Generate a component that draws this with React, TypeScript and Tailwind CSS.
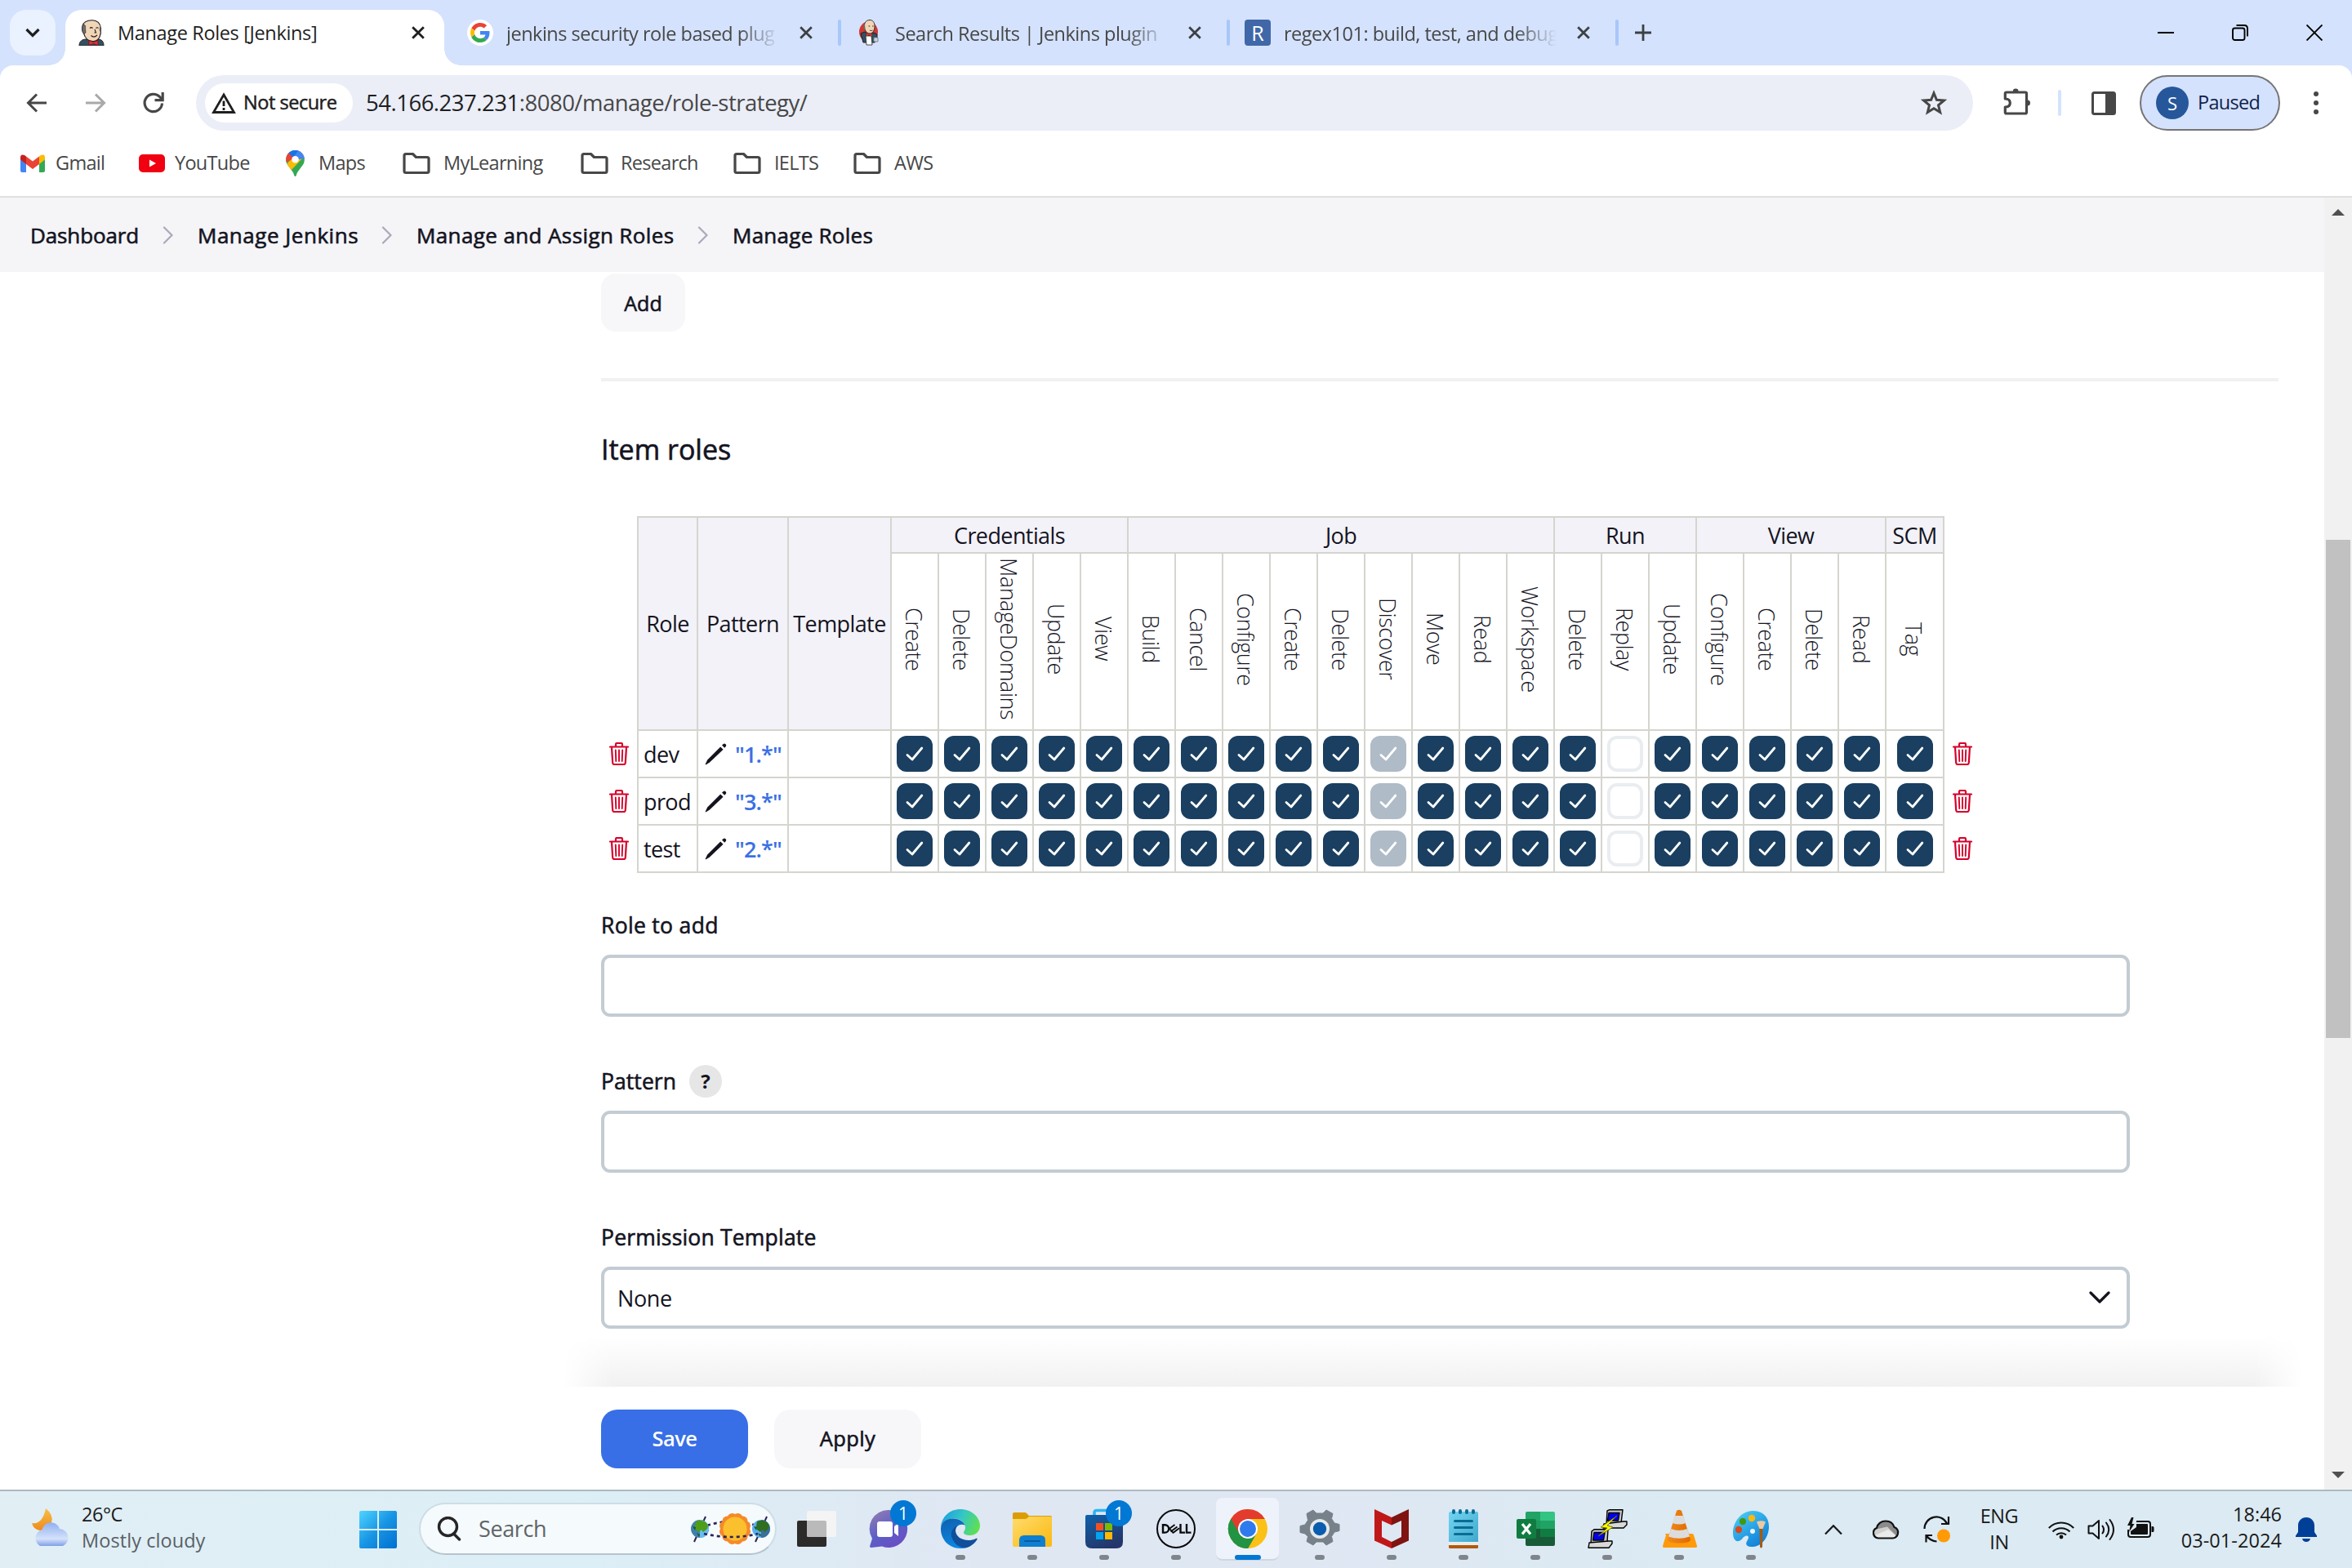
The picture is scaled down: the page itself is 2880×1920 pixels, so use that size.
import type { ReactNode } from "react";

const GROUPS: { name: string; perms: string[]; span: string }[] = [
  { name: "Credentials", perms: ["Create", "Delete", "ManageDomains", "Update", "View"], span: "col-span-5" },
  {
    name: "Job",
    perms: ["Build", "Cancel", "Configure", "Create", "Delete", "Discover", "Move", "Read", "Workspace"],
    span: "col-span-9",
  },
  { name: "Run", perms: ["Delete", "Replay", "Update"], span: "col-span-3" },
  { name: "View", perms: ["Configure", "Create", "Delete", "Read"], span: "col-span-4" },
  { name: "SCM", perms: ["Tag"], span: "col-span-1" },
];

const ROLES = [
  { name: "dev", pattern: '"1.*"' },
  { name: "prod", pattern: '"3.*"' },
  { name: "test", pattern: '"2.*"' },
];

/* ---------- small glyphs ---------- */

function Cross({ className }: { className: string }) {
  return (
    <svg viewBox="0 0 16 16" className={className} fill="none" stroke="currentColor" strokeWidth="2.8">
      <path d="M1.2 1.2 14.8 14.8M14.8 1.2 1.2 14.8" />
    </svg>
  );
}

function JenkinsHead({ badge }: { badge?: boolean }) {
  return (
    <svg viewBox="0 0 32 32" className="h-8 w-8 shrink-0">
      {badge && <ellipse cx="15.500" cy="15" rx="11.500" ry="12.500" fill="#d33833" />}
      {badge ? (
        <>
          <path d="M6 17 11 15l5 5 6-4 4 2v7l-3 3H9z" fill="#335061" stroke="#231f20" />
          <path d="M12 20h7l1 11h-7z" fill="#fff" stroke="#231f20" strokeWidth=".8" />
          <path d="M22 22h5v5h-5z" fill="#c9d3da" stroke="#6d7a83" strokeWidth=".8" />
          <path d="M10.500 7c0-4 3-6.500 6.500-6.500S23 3 23 8s-2 8.500-5.500 9c-3 .3-5.500-2-6.500-5z" fill="#f0d6b7" stroke="#231f20" strokeWidth=".9" />
          <path d="M11 5c-1.500 1-2 4-1.500 7l1.500 1z" fill="#6d6b6d" />
          <path d="m13 17 3 1.500 3.500-1.500v3.500L16 19l-3 1.500z" fill="#d33833" />
          <path d="M15.500 8h1.800M20 8h1.500M17 13c1 .8 2.500.6 3.500 0" stroke="#231f20" strokeWidth=".9" fill="none" />
        </>
      ) : (
        <>
          <path d="M1 32c0-5 3-8 9-8l7 2 6-2c6 0 8 3 8 8z" fill="#335061" stroke="#231f20" />
          <path d="M5 8C6 3 11 .7 17 .7c6 0 10 4 10.500 10C28 18 26 26 18.500 26.500 12 27 8 22 6.500 17 5 15 4 13 5 8z" fill="#f0d6b7" stroke="#231f20" strokeWidth="1.100" />
          <path d="M5.500 6.500c3-.8 3.500 1.500 3 4l.5 5.500-2 1.500C4 15 4 10 5.500 6.500z" fill="#6d6b6d" stroke="#231f20" strokeWidth=".6" />
          <path d="M26.500 7c1.200 3 1.200 6 .6 9l-1.500-3z" fill="#6d6b6d" />
          <path d="M14 10.500c1-1 2.500-1 3.500 0M21.500 10.500c1-1 2-1 3 0M20 12l1.500 4h-2M15.500 19.500c2 2 5 1.800 7.500-.5" fill="none" stroke="#231f20" strokeWidth="1.100" />
          <path d="m13 25.500 5.500 2 5.500-2v6l-5.500-2-5.500 2z" fill="#d33833" stroke="#81001b" strokeWidth=".7" />
        </>
      )}
    </svg>
  );
}

function GoogleG() {
  return (
    <svg viewBox="0 0 48 48" className="h-6 w-6">
      <path fill="#EA4335" d="M24 9.500c3.540 0 6.710 1.220 9.210 3.600l6.850-6.850C35.900 2.380 30.470 0 24 0 14.620 0 6.510 5.380 2.560 13.220l7.980 6.190C12.430 13.720 17.740 9.500 24 9.500z" />
      <path fill="#4285F4" d="M46.980 24.550c0-1.570-.15-3.090-.38-4.550H24v9.020h12.940c-.58 2.960-2.260 5.480-4.780 7.180l7.730 6c4.510-4.180 7.090-10.360 7.090-17.650z" />
      <path fill="#FBBC05" d="M10.530 28.590c-.48-1.450-.76-2.990-.76-4.590s.27-3.140.76-4.590l-7.980-6.190C.92 16.460 0 20.120 0 24c0 3.880.92 7.540 2.560 10.780l7.970-6.190z" />
      <path fill="#34A853" d="M24 48c6.480 0 11.930-2.130 15.890-5.810l-7.730-6c-2.150 1.450-4.920 2.300-8.160 2.300-6.260 0-11.570-4.220-13.470-9.910l-7.980 6.190C6.510 42.620 14.620 48 24 48z" />
    </svg>
  );
}

function Folder() {
  return (
    <svg viewBox="0 0 34 28" className="h-7 w-[34px] shrink-0" fill="none" stroke="#474747" strokeWidth="3.200" strokeLinejoin="round">
      <path d="M2 4.500Q2 2.500 4 2.500h8.500l4 4H30q2 0 2 2V23.500q0 2-2 2H4q-2 0-2-2z" />
    </svg>
  );
}

function TrashIcon() {
  return (
    <svg viewBox="0 0 24 28" className="h-7 w-6" fill="none" stroke="#d6002a" strokeWidth="2.200" strokeLinecap="round" strokeLinejoin="round">
      <path d="M1 5.500h22M8 5V2.500Q8 1 9.500 1h5Q16 1 16 2.500V5M3 6l1.200 19Q4.400 27 6 27h12q1.600 0 1.800-2L21 6" />
      <path d="M7.800 9.500 8.300 23M12 9.500V23M16.200 9.500 15.700 23" strokeWidth="1.900" />
    </svg>
  );
}

function PencilIcon() {
  return (
    <svg viewBox="0 0 27 27" className="h-[27px] w-[27px] shrink-0" fill="#14141f">
      <path d="M19.200 4.400 22.600 7.800 6 23.600 1.600 26.200Q.3 26.700.8 25.400L3.200 20.600z" />
      <path d="M21 2.600 22.800.9q1.400-1 2.700.3t.3 2.700L24.200 5.800z" />
    </svg>
  );
}

/* ---------- browser chrome ---------- */

function InactiveTab({ icon, title }: { icon: ReactNode; title: string }) {
  return (
    <div className="flex h-full w-[458px] items-center">
      <div className="flex w-8 shrink-0 justify-center">{icon}</div>
      <div className="mt-0.5 ml-4 w-[336px] overflow-hidden leading-10 tracking-[-0.021em] whitespace-nowrap text-[#474747] [mask-image:linear-gradient(to_right,black_285px,transparent_334px)]">
        {title}
      </div>
      <Cross className="ml-[23px] h-4 w-4 shrink-0 text-[#3c4043]" />
      <div className="ml-auto h-8 w-1 rounded bg-[#a8c7fa]" />
    </div>
  );
}

function TabStrip() {
  return (
    <div className="flex h-20 items-center bg-[#d4e2fd] text-[23.500px]">
      <div className="ml-3 flex h-14 w-14 items-center justify-center rounded-[20px] bg-[#eaf1ff]">
        <svg viewBox="0 0 18 12" className="h-3 w-[18px]" fill="none" stroke="#1f1f1f" strokeWidth="3.200">
          <path d="m1.500 2 7.500 7.500L16.500 2" />
        </svg>
      </div>
      <div className="relative ml-3 flex h-[68px] w-[464px] items-center self-end rounded-t-[20px] bg-white pb-3 pl-4">
        <div className="absolute bottom-0 -left-5 h-5 w-5 bg-[radial-gradient(circle_at_0_0,transparent_19.500px,white_20px)]" />
        <div className="absolute -right-5 bottom-0 h-5 w-5 bg-[radial-gradient(circle_at_100%_0,transparent_19.500px,white_20px)]" />
        <JenkinsHead />
        <span className="mt-0.5 ml-4 w-[360px] tracking-[-0.015em] whitespace-nowrap text-[#1f1f1f]">Manage Roles [Jenkins]</span>
        <Cross className="h-4 w-4 shrink-0 text-[#1f1f1f]" />
      </div>
      <div className="w-7" />
      <InactiveTab
        title="jenkins security role based plug"
        icon={
          <div className="flex h-8 w-8 items-center justify-center rounded-full bg-white">
            <GoogleG />
          </div>
        }
      />
      <div className="w-[18px]" />
      <InactiveTab title="Search Results | Jenkins plugin" icon={<JenkinsHead badge />} />
      <div className="w-[18px]" />
      <InactiveTab
        title="regex101: build, test, and debug"
        icon={<div className="flex h-8 w-8 items-center justify-center rounded-sm bg-[#4067a8] text-[25px] leading-none text-white">R</div>}
      />
      <svg viewBox="0 0 20 20" className="ml-5 h-5 w-5" stroke="#3c4043" strokeWidth="2.800">
        <path d="M10 0v20M0 10h20" />
      </svg>
      <div className="ml-auto flex items-center gap-[71px] pr-9">
        <div className="h-0.5 w-5 bg-black" />
        <svg viewBox="0 0 20 20" className="h-5 w-5" fill="none" stroke="#000" strokeWidth="1.900">
          <rect x="1" y="4.500" width="14.500" height="14.500" rx="2.500" />
          <path d="M5.500 1H15q4 0 4 4v9.500" />
        </svg>
        <svg viewBox="0 0 20 20" className="h-5 w-5" stroke="#000" strokeWidth="1.900">
          <path d="m.5.5 19 19M19.500.5l-19 19" />
        </svg>
      </div>
    </div>
  );
}

function Toolbar() {
  return (
    <div className="bg-[#d4e2fd]">
      <div className="flex h-20 items-center rounded-t-2xl bg-white pt-3 text-[23.500px]">
        <svg viewBox="0 0 26 24" className="ml-8 h-6 w-[26px]" fill="none" stroke="#474747" strokeWidth="3">
          <path d="M25 12H3M13 1.500 2.500 12 13 22.500" />
        </svg>
        <svg viewBox="0 0 26 24" className="ml-[46px] h-6 w-[26px]" fill="none" stroke="#a9a9a9" strokeWidth="3">
          <path d="M1 12h22M13 1.500 23.500 12 13 22.500" />
        </svg>
        <svg viewBox="0 0 26 26" className="ml-[45px] h-[26px] w-[26px]" fill="none" stroke="#474747" strokeWidth="3.200">
          <path d="M23.500 13.500A10.700 10.700 0 1 1 20.500 5.500L24 9" />
          <path d="M24.200 0v9.600h-9.700" />
        </svg>
        <div className="ml-[39px] flex h-[68px] w-[2176px] items-center rounded-full bg-[#ebeef7] pl-[11px]">
          <div className="flex h-12 w-[181px] items-center rounded-full bg-white pl-2">
            <svg viewBox="0 0 30 26" className="h-[26px] w-[30px] shrink-0" fill="none" stroke="#1f1f1f" strokeWidth="2.800">
              <path d="M15 3 27.500 24.500h-25z" />
              <path d="M15 10.500v6.500M15 19v3" />
            </svg>
            <span className="ml-[9px] tracking-[-0.02em] whitespace-nowrap text-[#1f1f1f] [-webkit-text-stroke:0.500px_#1f1f1f]">Not secure</span>
          </div>
          <span className="ml-4 text-[27.500px] tracking-[-0.018em] text-[#474747]">
            <span className="text-[#1f1f1f]">54.166.237.231</span>:8080/manage/role-strategy/
          </span>
          <svg viewBox="0 0 32 32" className="mr-8 ml-auto h-8 w-8" fill="none" stroke="#474747" strokeWidth="3">
            <path d="m16 4 3.400 8.300 9 .7-6.900 5.800 2.200 8.700-7.700-4.700-7.700 4.700 2.200-8.700L3.600 13l9-.7z" />
          </svg>
        </div>
        <svg viewBox="0 0 34 34" className="-mt-1 ml-[37px] h-[34px] w-[34px]" fill="none" stroke="#474747" strokeWidth="3.200" strokeLinejoin="round">
          <path d="M2.300 7.500Q2.300 6 4 6H27q1.500 0 1.500 1.500V30.500Q28.500 32 27 32H4q-1.700 0-1.700-1.500V24c5 0 6-3 6-5s-1-5-6-5z" />
          <path d="M11.800 5a3.400 3.400 0 0 1 6.800 0zM29.500 15.500a3.400 3.400 0 0 1 0 7z" fill="#474747" stroke="none" />
        </svg>
        <div className="ml-[33px] h-8 w-1 rounded bg-[#d3e3fd]" />
        <svg viewBox="0 0 30 29" className="ml-[37px] h-[29px] w-[30px]" fill="none" stroke="#474747" strokeWidth="3">
          <rect x="1.500" y="1.500" width="27" height="26" rx="2" />
          <path d="M17 1.500h10v26H17z" fill="#474747" stroke="none" />
        </svg>
        <div className="ml-[29px] flex h-[68px] w-[172px] items-center rounded-full border-2 border-[#757575] bg-[#d5e2fd] pl-[18px]">
          <div className="flex h-10 w-10 items-center justify-center rounded-full bg-[#26579b] text-[22px] text-white">S</div>
          <span className="ml-[11px] tracking-[-0.03em] text-[#0f1f4d]">Paused</span>
        </div>
        <div className="ml-[41px] flex flex-col gap-[5px]">
          <div className="h-1.5 w-1.5 rounded-full bg-[#474747]" />
          <div className="h-1.5 w-1.5 rounded-full bg-[#474747]" />
          <div className="h-1.5 w-1.5 rounded-full bg-[#474747]" />
        </div>
      </div>
    </div>
  );
}

function Bookmark({ icon, label, width, gap }: { icon: ReactNode; label: string; width: string; gap: string }) {
  return (
    <div className={`flex items-center whitespace-nowrap ${width} ${gap}`}>
      {icon}
      <span>{label}</span>
    </div>
  );
}

function Bookmarks() {
  return (
    <div className="flex h-[82px] items-center border-b-2 border-[#e0e0e0] bg-white pl-[25px] text-[23.500px] tracking-[-0.03em] text-[#474747]">
      <Bookmark
        width="w-[145px]"
        gap="gap-[13px]"
        label="Gmail"
        icon={
          <svg viewBox="0 0 30 22" className="h-[22px] w-[30px] shrink-0">
            <path d="M0 3v17q0 2 2 2h5V8z" fill="#4285f4" />
            <path d="M30 3v17q0 2-2 2h-5V8z" fill="#34a853" />
            <path d="M7 2.500 15 8.500l8-6V12l-8 6-8-6z" fill="#ea4335" />
            <path d="M23 2.500 25 1q5-2 5 3v2.500L23 12z" fill="#fbbc04" />
            <path d="M7 2.500 5 1Q0-1 0 4v2.500L7 12z" fill="#c5221f" />
          </svg>
        }
      />
      <Bookmark
        width="w-[180px]"
        gap="gap-3"
        label="YouTube"
        icon={
          <svg viewBox="0 0 32 22" className="h-[22px] w-8 shrink-0">
            <rect width="32" height="22" rx="5" fill="#f00010" />
            <path d="m13 6.500 8 4.500-8 4.500z" fill="#fff" />
          </svg>
        }
      />
      <Bookmark
        width="w-[143px]"
        gap="gap-[17px]"
        label="Maps"
        icon={
          <svg viewBox="0 0 23 32" className="h-8 w-[23px] shrink-0">
            <clipPath id="pin">
              <path d="M11.500 0A11.300 11.300 0 0 0 .2 11.300c0 5 2.300 7.200 5 10.700 2.700 3.500 4.300 5.500 5 8.700.5 1.800 2.100 1.800 2.600 0 .7-3.200 2.300-5.200 5-8.700 2.700-3.500 5-5.700 5-10.700A11.300 11.300 0 0 0 11.500 0z" />
            </clipPath>
            <g clipPath="url(#pin)">
              <path d="M0 0h23v32H0z" fill="#34a853" />
              <path d="M0 18 20-4l3 11L6 25z" fill="#fbbc04" />
              <path d="M8-2h16v12L9 12z" fill="#4285f4" />
              <path d="M-2 16V3L4 2l8 7z" fill="#ea4335" />
              <path d="M3 3 10-1h6L9 9z" fill="#1a73e8" />
            </g>
            <circle cx="11.500" cy="11.300" r="4.300" fill="#fff" />
          </svg>
        }
      />
      <Bookmark width="w-[218px]" gap="gap-4" label="MyLearning" icon={<Folder />} />
      <Bookmark width="w-[187px]" gap="gap-[15px]" label="Research" icon={<Folder />} />
      <Bookmark width="w-[147px]" gap="gap-4" label="IELTS" icon={<Folder />} />
      <Bookmark width="w-[120px]" gap="gap-4" label="AWS" icon={<Folder />} />
    </div>
  );
}

/* ---------- Jenkins page ---------- */

const MEDIUM = "[-webkit-text-stroke:0.600px_currentColor]";

function Crumb({ label, width, last }: { label: string; width: string; last?: boolean }) {
  return (
    <div className={`flex items-center whitespace-nowrap ${width}`}>
      <span className={MEDIUM}>{label}</span>
      {!last && (
        <svg viewBox="0 0 13 22" className="mr-[30px] ml-auto h-[22px] w-[13px]" fill="none" stroke="#a9a9bb" strokeWidth="2.200" strokeLinecap="round">
          <path d="m2 1.500 9.500 9.500L2 20.500" />
        </svg>
      )}
    </div>
  );
}

function Breadcrumbs() {
  return (
    <div className="flex h-[91px] shrink-0 items-center bg-[#f5f5f8] pl-[37px] text-[26px] text-[#14141f]">
      <Crumb label="Dashboard" width="w-[205px] tracking-[-0.005em]" />
      <Crumb label="Manage Jenkins" width="w-[268px] tracking-[0.020em]" />
      <Crumb label="Manage and Assign Roles" width="w-[387px] tracking-[0.015em]" />
      <Crumb label="Manage Roles" width="w-[200px] tracking-[0.010em]" last />
    </div>
  );
}

function Box({ perm }: { perm: string }) {
  if (perm === "Replay") return <div className="h-11 w-11 rounded-xl border-4 border-[#e9edf0] bg-white" />;
  return (
    <div className={`flex h-11 w-11 items-center justify-center rounded-xl ${perm === "Discover" ? "bg-[#afbbc7]" : "bg-[#1a3f60]"}`}>
      <svg viewBox="0 0 22 18" className="h-[18px] w-[22px]" fill="none" stroke="#fff" strokeWidth="2.800" strokeLinecap="round" strokeLinejoin="round">
        <path d="m2 10.500 6 5.500L19.800 2" />
      </svg>
    </div>
  );
}

const CELL = "border-r-2 border-b-2 border-[#d5d5cf]";
const HEAD = "flex items-center justify-center border-r-2 border-b-2 border-[#d5d5cf] bg-[#f3f2f8]";

function TrashColumn() {
  return (
    <div className="flex w-11 flex-col self-end pb-px">
      {ROLES.map((r) => (
        <div key={r.name} className="flex h-[58px] items-center justify-center">
          <TrashIcon />
        </div>
      ))}
    </div>
  );
}

function RoleTable() {
  return (
    <div className="mt-[60px] flex">
      <TrashColumn />
      <div className="grid grid-cols-[73px_111px_126px_repeat(21,58px)_71px] grid-rows-[44px_217px_58px_58px_58px] border-t-2 border-l-2 border-[#d5d5cf] text-[27px] tracking-[-0.022em]">
        <div className={`row-span-2 ${HEAD}`}>Role</div>
        <div className={`row-span-2 ${HEAD}`}>Pattern</div>
        <div className={`row-span-2 ${HEAD}`}>Template</div>
        {GROUPS.map((g) => (
          <div key={g.name} className={`${g.span} ${HEAD}`}>
            {g.name}
          </div>
        ))}
        {GROUPS.flatMap((g) =>
          g.perms.map((p) => (
            <div key={g.name + p} className={`flex items-center justify-center pr-0.5 pb-1.5 ${CELL}`}>
              <span className="leading-none font-light tracking-[-0.018em] text-[#14141f] [writing-mode:vertical-rl]">{p}</span>
            </div>
          )),
        )}
        {ROLES.map((r) => (
          <RoleCells key={r.name} {...r} />
        ))}
      </div>
      <TrashColumn />
    </div>
  );
}

function RoleCells({ name, pattern }: { name: string; pattern: string }) {
  return (
    <>
      <div className={`flex items-center pl-1.5 ${CELL}`}>{name}</div>
      <div className={`flex items-center gap-2.5 pl-2 ${CELL}`}>
        <PencilIcon />
        <span className="font-semibold tracking-[-0.032em] text-[#3a70e4]">{pattern}</span>
      </div>
      <div className={CELL} />
      {GROUPS.flatMap((g) =>
        g.perms.map((p) => (
          <div key={g.name + p} className={`flex items-center justify-center ${CELL}`}>
            <Box perm={p} />
          </div>
        )),
      )}
    </>
  );
}

function Field({ label, help, children, gap }: { label: string; help?: boolean; children?: ReactNode; gap: string }) {
  return (
    <div className={`w-[1872px] ${gap}`}>
      <div className="flex h-10 items-center gap-4 text-[26.500px]">
        <span className={MEDIUM}>{label}</span>
        {help && <div className="flex h-10 w-10 items-center justify-center rounded-full bg-[#e6e6e6] text-2xl font-bold">?</div>}
      </div>
      <div className="mt-4 flex h-[76px] items-center rounded-[11px] border-4 border-[#c3ccd3] bg-white px-4 text-[27px] tracking-[-0.015em]">{children}</div>
    </div>
  );
}

function Page() {
  return (
    <div className="flex h-[1582px] bg-white text-[#14141f]">
      <div className="flex min-w-0 flex-1 flex-col">
        <Breadcrumbs />
        <div className="flex h-[1365px] flex-col overflow-hidden">
          <div className="pl-[736px]">
            <div className={`mt-0.5 flex h-[71px] w-[103px] items-center justify-center rounded-[18px] bg-[#f7f7fa] pt-0.5 text-[25px] ${MEDIUM}`}>Add</div>
            <div className="mt-[57px] h-1 w-[2054px] bg-[#f1f1f4]" />
            <div className={`mt-[61px] flex h-11 items-center text-[34px] ${MEDIUM}`}>Item roles</div>
            <RoleTable />
            <Field label="Role to add" gap="mt-11 tracking-[0.020em]" />
            <Field label="Pattern" help gap="mt-[59px] tracking-[0.005em]" />
            <Field label="Permission Template" gap="mt-[59px] tracking-[0.012em]">
              <span>None</span>
              <svg viewBox="0 0 26 16" className="mr-1 ml-auto h-4 w-[26px]" fill="none" stroke="#14141f" strokeWidth="3.200" strokeLinecap="round" strokeLinejoin="round">
                <path d="m2 2 11 11L24 2" />
              </svg>
            </Field>
          </div>
          <div className="mt-auto ml-[690px] h-[62px] bg-linear-to-t from-[#f1f1f1] to-white [mask-image:linear-gradient(to_right,transparent,black_60px,black_2070px,transparent_2130px)]" />
        </div>
        <div className="flex h-[126px] gap-8 pt-7 pl-[736px] text-[25.500px]">
          <div className="flex h-[72px] w-[180px] items-center justify-center rounded-[20px] bg-[#386fe6] font-semibold tracking-[-0.022em] text-white">Save</div>
          <div className={`flex h-[72px] w-[180px] items-center justify-center rounded-[20px] bg-[#f7f7fa] tracking-[0.015em] ${MEDIUM}`}>Apply</div>
        </div>
      </div>
      <div className="flex w-[34px] flex-col items-center bg-[#f1f1f1] pt-3.5 pb-3.5">
        <div className="h-2 w-4 bg-[#505050] [clip-path:polygon(50%_0,100%_100%,0_100%)]" />
        <div className="mt-[397px] h-[610px] w-[30px] bg-[#c1c1c1]" />
        <div className="mt-auto h-2 w-4 bg-[#505050] [clip-path:polygon(0_0,100%_0,50%_100%)]" />
      </div>
    </div>
  );
}

/* ---------- taskbar ---------- */

function App48({ children, dot = true, active, badge }: { children: ReactNode; dot?: boolean; active?: boolean; badge?: boolean }) {
  return (
    <div className="relative flex h-[94px] w-[88px] shrink-0 items-center justify-center">
      {active && <div className="absolute top-2 left-[5px] h-[77px] w-[77px] rounded-lg border-b-2 border-[#cfd6e0] bg-[#eef2fa]" />}
      <svg viewBox="0 0 48 48" className="relative -mt-0.5 h-12 w-12 overflow-visible">
        {children}
      </svg>
      {badge && (
        <div className="absolute top-[11px] left-[46px] flex h-8 w-8 items-center justify-center rounded-full bg-[#0078d4] text-[21px] leading-none text-white">1</div>
      )}
      {active && <div className="absolute bottom-2.5 left-7 h-1.5 w-8 rounded-full bg-[#0078d4]" />}
      {dot && !active && <div className="absolute bottom-2.5 left-[38px] h-1.5 w-3 rounded-full bg-[#7f858b]" />}
    </div>
  );
}

function Earth({ x, flip }: { x: number; flip?: boolean }) {
  return (
    <g transform={`translate(${x} 19)`}>
      <path d="M-7 16 7-15" stroke="#2b2358" strokeWidth="2" />
      <circle r="11" fill={flip ? "#5aaef0" : "#3f7fae"} />
      <path d="M0-11A11 11 0 0 1 0 11z" fill={flip ? "#3a6e9c" : "#67bdf5"} />
      <path d="M-5-9q4-2 8-1 4 1 6 4 2 4-1 7l-4 3-2-3-3 3-4-3-1-4z" fill={flip ? "#2f6f1f" : "#4f9e18"} />
      <path d="M-4 5l4 2-1 3zM-9-3l4 1-1 4z" fill="#1d5c1a" />
    </g>
  );
}

function Apps() {
  return (
    <>
      <App48 dot={false}>
        <rect x="0" y="14" width="36" height="32" rx="2" fill="#2c2b2a" />
        <rect x="12" y="2" width="36" height="32" rx="2" fill="#f4f4f4" />
        <path d="M12 14h22q2 0 2 2v18H14q-2 0-2-2z" fill="#bababa" />
      </App48>
      <App48 dot={false} badge>
        <defs>
          <linearGradient id="chat" x1="0" y1="0" x2="0.600" y2="1">
            <stop offset="0" stopColor="#9a7fb0" />
            <stop offset="0.600" stopColor="#5b5fc7" />
            <stop offset="1" stopColor="#6a4fc4" />
          </linearGradient>
        </defs>
        <path d="M24 1a23 23 0 1 1-8 44.500L3 47Q.5 47 1.300 44.500L4 36A23 23 0 0 1 24 1z" fill="url(#chat)" />
        <rect x="10" y="15" width="19" height="19" rx="3" fill="#fff" />
        <path d="m31 21 5-4v16l-5-4z" fill="#fff" />
      </App48>
      <App48>
        <defs>
          <linearGradient id="edgeTop" x1="0" y1="0.300" x2="1" y2="0.600">
            <stop offset="0" stopColor="#1f9ee0" />
            <stop offset="0.500" stopColor="#35c7c4" />
            <stop offset="1" stopColor="#5fe04f" />
          </linearGradient>
          <linearGradient id="edgeMid" x1="0" y1="0" x2="0.300" y2="1">
            <stop offset="0" stopColor="#0f5fae" />
            <stop offset="1" stopColor="#0b86e0" />
          </linearGradient>
        </defs>
        <path d="M0 22C1 9 11 0 24 0c14 0 24 10 24 20 0 8-6 12-12 12-5 0-8-1.500-8-3.500 0-1.500 2-2.500 2-6C30 17 25 11.500 16 11.500 7 11.500 1.500 16 0 22z" fill="url(#edgeTop)" />
        <path d="M0 24C0 16 7 11.500 15 11.500c8 0 13 4 14.500 8C24 17 18 20 18 27c0 9 6 16 14 20-2.500.8-5 1-8 1C10 48 0 37 0 24z" fill="url(#edgeMid)" />
        <path d="M20 20c-6 3-9 9-6 16 3 7 9 12 18 11 6-2 10-6 12.500-10 .5-1-.5-1.500-1.500-1-3 1.500-6 2-9 2-9 0-16-5-16-12 0-2.500 1-4.500 2-6z" fill="#114f9a" />
      </App48>
      <App48>
        <defs>
          <linearGradient id="fold" x1="0" y1="0" x2="1" y2="1">
            <stop offset="0" stopColor="#ffdc6e" />
            <stop offset="1" stopColor="#fbb80f" />
          </linearGradient>
        </defs>
        <path d="M0 6q0-2 2-2h13q2 0 3.500 2.500L20 8h26q2 0 2 2v8H0z" fill="#dc9c06" />
        <path d="M0 12h15q2 0 4-2l1-1h26q2 0 2 2v33q0 2-2 2H2q-2 0-2-2z" fill="url(#fold)" />
        <path d="M8 46V38q0-6 6-6h20q6 0 6 6v8z" fill="#0d7fd0" />
        <path d="M15 39h18" stroke="#0b5aa0" strokeWidth="2" strokeLinecap="round" />
      </App48>
      <App48 badge>
        <defs>
          <linearGradient id="store" x1="0" y1="0" x2="0.500" y2="1">
            <stop offset="0" stopColor="#0d62ad" />
            <stop offset="1" stopColor="#25376a" />
          </linearGradient>
        </defs>
        <path d="M12 11V4q0-2.500 3-2.500h18q3 0 3 2.500v7" fill="none" stroke="#2bb5f0" strokeWidth="3.600" />
        <path d="M1 9q0-2 2-2h42q2 0 2 2v31q0 8-8 8H9q-8 0-8-8z" fill="url(#store)" />
        <path d="M14 17h9v9h-9z" fill="#f25022" />
        <path d="M25 17h9v9h-9z" fill="#7fba00" />
        <path d="M14 28h9v9h-9z" fill="#00a4ef" />
        <path d="M25 28h9v9h-9z" fill="#ffb900" />
      </App48>
      <App48>
        <circle cx="24" cy="24" r="23" fill="none" stroke="#0a0a0a" strokeWidth="2" />
        <g fill="none" stroke="#0a0a0a" strokeWidth="2.400">
          <path d="M8 19.200h2.500a4.600 4.600 0 0 1 0 9.400H8z" />
          <path d="m15 24.500 7.500-5.500M17.500 27.500l8-6M20 29.300l8-6M15.500 23l5 6" strokeWidth="1.900" />
          <path d="M29.500 18v10.600h5.500M37 18v10.600h5.500" />
        </g>
      </App48>
      <App48 active>
        <circle cx="24" cy="24" r="24" fill="#fbc117" />
        <path d="M24 24 3.200 12A24 24 0 0 1 44.800 12H24z" fill="#e33b2e" />
        <path d="M3.200 12A24 24 0 0 0 24 48L34.400 30 24 24z" fill="#229342" />
        <path d="M3.200 12 13.600 30 24 24V12z" fill="#e33b2e" />
        <path d="M3.200 12A24 24 0 0 0 24 48L34.400 30A12 12 0 0 1 13.600 30z" fill="#229342" />
        <circle cx="24" cy="24" r="12" fill="#fff" />
        <circle cx="24" cy="24" r="10" fill="#2f7bee" />
      </App48>
      <App48>
        <path
          d="M16 2.500 20 6.500h8l4-4 8 4.500-1.500 6 3.500 5.500 6 1.500v8l-6 1.500-3.500 5.500 1.500 6-8 4.500-4-4h-8l-4 4-8-4.500 1.500-6L6 31.500 0 30v-8l6-1.500 3.500-5.500L8 7z"
          transform="translate(0 -1.500)"
          fill="#77818a"
          stroke="#77818a"
          strokeLinejoin="round"
        />
        <circle cx="24" cy="24" r="12" fill="#e6e8ea" />
        <circle cx="24" cy="24" r="8.200" fill="#0a5cae" />
      </App48>
      <App48>
        <path d="M3 0 24 10v9.500L12 14v20l12 6v8L3 38.500z" fill="#c01818" />
        <path d="M45 0 24 10v9.500L36 14v20l-12 6v8l21-9.500z" fill="#7f1410" />
      </App48>
      <App48>
        <defs>
          <linearGradient id="note" x1="0" y1="0" x2="1" y2="1">
            <stop offset="0" stopColor="#74d4f2" />
            <stop offset="1" stopColor="#3fa9cc" />
          </linearGradient>
        </defs>
        <path d="M6 40h36v5H6z" fill="#ececec" />
        <path d="M6 44h36v2.500q0 1.500-1.500 1.500h-33Q6 48 6 46.500z" fill="#b05a0c" />
        <path d="M6 5q0-2 2-2h32q2 0 2 2v35H6z" fill="url(#note)" />
        <path d="M12 2v2M20 2v2M28 2v2M36 2v2" stroke="#0a6c94" strokeWidth="4" strokeLinecap="round" />
        <path d="M13.500 14.500h21M13.500 22.500h21M13.500 30.500h21" stroke="#0a6c94" strokeWidth="3" strokeLinecap="round" />
      </App48>
      <App48>
        <path d="M12 5q0-2 2-2h16v12H12z" fill="#21a366" />
        <path d="M30 3h16q2 0 2 2v10H30z" fill="#33c481" />
        <path d="M12 14h18v11H12z" fill="#1c9a5e" />
        <path d="M30 14h18v11H30z" fill="#21a366" />
        <path d="M12 24h18v10H12z" fill="#185c37" />
        <path d="M30 24h18v10H30z" fill="#107c41" />
        <path d="M12 34h36v9q0 2-2 2H14q-2 0-2-2z" fill="#185c37" />
        <rect x="1" y="12" width="24" height="24" rx="2" fill="#107c41" />
        <path d="m8 18 10 12.500M18 18 8 30.500" stroke="#fff" strokeWidth="3.200" />
      </App48>
      <App48>
        <g stroke="#000" strokeWidth="1.400" strokeLinejoin="round">
          <path d="M24 2 27 .7h16L41 17l-3 2H23z" fill="#c6c6c6" />
          <path d="M26 4.500h13L37.500 14h-13z" fill="#0000f0" />
          <path d="m20 18 24-3h4v4l-4 4H19z" fill="#d8d8d8" />
          <path d="M5 27 8 24.700h17L24 40l-3 2H4z" fill="#c6c6c6" />
          <path d="M8 28.500h13L19.500 38h-13z" fill="#0000f0" />
          <path d="m2 41 24-2h4v3l-4 5.300H1z" fill="#d8d8d8" />
        </g>
        <path d="M36 8 16 22l8 1-11 10 18-11-7-2z" fill="#ffff00" stroke="#6b6b00" strokeWidth=".9" />
      </App48>
      <App48>
        <defs>
          <linearGradient id="cone" x1="0" y1="0" x2="1" y2="0">
            <stop offset="0" stopColor="#f08a1c" />
            <stop offset="1" stopColor="#e06a00" />
          </linearGradient>
        </defs>
        <path d="M8 30h32q1.500 0 2 2l4 13q.5 2-1.500 2h-39q-2 0-1.500-2l4-13Q6.500 30 8 30z" fill="#ff9a0a" />
        <path d="M21 2q3-2.500 6 0l11 35q0 4.500-14 4.500T10 37z" fill="url(#cone)" />
        <path d="M18.800 8h10.400l3 9q-8 3-16.300 0zM14 24q10 4 20 0l3 9.500q-13 4.500-26 0z" fill="#dcdcdc" />
      </App48>
      <App48>
        <defs>
          <linearGradient id="pal" x1="0" y1="0" x2="0.700" y2="1">
            <stop offset="0" stopColor="#4fd2f7" />
            <stop offset="1" stopColor="#0f7fd8" />
          </linearGradient>
        </defs>
        <path d="M26 2C12 2 2 16 2 29c0 7 3 11 7 10 4-.8 6-7 10-6.500 4 .5 1 5-.5 8-1.500 4 3 6 8 5.500C38 45 46 34 46 21 46 9 38 2 26 2z" fill="url(#pal)" />
        <circle cx="25" cy="11" r="4.200" fill="#fcb90c" />
        <circle cx="14" cy="15" r="4.200" fill="#3f9a12" />
        <circle cx="9" cy="25" r="4.200" fill="#d8481c" />
        <circle cx="26" cy="27" r="3" fill="#e9f6ff" />
        <path d="M31 15.500q5.500-2.500 11 0L38.500 24h-4z" fill="#ecc9a0" />
        <path d="M34.500 24h4L38 46q-1.500 3-3 0z" fill="#a65a12" />
      </App48>
    </>
  );
}

function Taskbar() {
  return (
    <div className="flex h-24 items-center border-t-2 border-[#adb9c0] bg-[linear-gradient(to_right,#e1eff5_0%,#dceef6_25%,#dfe7f3_42%,#dfe7f3_55%,#dbeaf3_72%,#dceaf3_100%)] text-[23.500px] text-[#1a1a1a]">
      <svg viewBox="0 0 48 48" className="mb-1.5 ml-[38px] h-12 w-12 shrink-0">
        <defs>
          <linearGradient id="moon" x1="0" y1="0" x2="0" y2="1">
            <stop offset="0" stopColor="#f6c04a" />
            <stop offset="1" stopColor="#ef8a1c" />
          </linearGradient>
          <linearGradient id="cloud" x1="0" y1="0" x2="0" y2="1">
            <stop offset="0" stopColor="#8fb0f0" />
            <stop offset="0.700" stopColor="#d5e2fa" />
            <stop offset="1" stopColor="#7f9fe6" />
          </linearGradient>
        </defs>
        <path d="M18 1q10 8 7 17t-14 10Q3 27 1 19q13 2 17-18z" fill="url(#moon)" />
        <path d="M11 47a11 11 0 0 1 0-19q2 0 2.500.3A11 11 0 0 1 35 26a11 11 0 0 1 4 21z" fill="url(#cloud)" />
      </svg>
      <div className="mb-1.5 ml-[14px] flex w-[340px] flex-col leading-8">
        <span className="tracking-[-0.020em]">26°C</span>
        <span className="tracking-[0.003em] text-[#5a6065]">Mostly cloudy</span>
      </div>
      <svg viewBox="0 0 46 46" className="h-[46px] w-[46px] shrink-0">
        <defs>
          <linearGradient id="win" x1="0" y1="0" x2="46" y2="46" gradientUnits="userSpaceOnUse">
            <stop offset="0" stopColor="#4fd4ff" />
            <stop offset="0.500" stopColor="#1895e4" />
            <stop offset="1" stopColor="#006fd0" />
          </linearGradient>
        </defs>
        <path d="M2 0h20v22H0V2q0-2 2-2zM24 0h20q2 0 2 2v20H24zM0 24h22v22H2q-2 0-2-2zM24 24h22v20q0 2-2 2H24z" fill="url(#win)" />
      </svg>
      <div className="mr-[5px] mb-0.5 ml-[27px] flex h-16 w-[438px] shrink-0 items-center rounded-full border-2 border-[#cddde6] border-b-[#b5c4cc] bg-[#f5fafc] pb-px pl-5 text-[27px] tracking-[-0.015em] text-[#5f6568]">
        <svg viewBox="0 0 30 30" className="h-[30px] w-[30px]" fill="none" stroke="#262626" strokeWidth="3.400" strokeLinecap="round">
          <circle cx="13.500" cy="12.500" r="11" />
          <path d="m20.500 21 7 7" />
        </svg>
        <span className="ml-[21px]">Search</span>
        <svg viewBox="0 0 100 38" className="mr-[3px] ml-auto h-[38px] w-[100px] overflow-visible">
          <path d="M20 15Q50 5 80 15" fill="none" stroke="#2b2358" strokeWidth="2.600" strokeDasharray="4 4" />
          <g fill="#f58a2a">
            {[0, 30, 60].map((a) => (
              <rect key={a} x="38.500" y="3.500" width="31" height="31" rx="6" transform={`rotate(${a} 54 19)`} />
            ))}
          </g>
          <circle cx="54" cy="19" r="14.500" fill="#fbc02d" />
          <Earth x={11} />
          <Earth x={86} flip />
          <path d="M16 25Q50 33 82 25" fill="none" stroke="#2b2358" strokeWidth="2.600" strokeDasharray="4 4" />
        </svg>
      </div>
      <Apps />
      <svg viewBox="0 0 22 12" className="ml-[46px] h-3 w-[22px] shrink-0" fill="none" stroke="#1a1a1a" strokeWidth="2.200">
        <path d="M1 11.500 11 1.200l10 10.300" />
      </svg>
      <svg viewBox="0 0 34 24" className="ml-9 h-6 w-[34px] shrink-0">
        <path d="M8 22.500a6.500 6.500 0 0 1-2-12.500C7 4.500 12 1.500 17 1.500S26 4 27.500 9a7 7 0 0 1-1.500 13.500z" fill="#8b8b8b" />
        <path d="M8 22.500a6.500 6.500 0 0 1-3-11l14-3 10 10q-1 4-4 4z" fill="#cfcfcf" />
        <path d="M4 19 20 12l9 7q-1 3.500-4 3.500H8z" fill="#eaeaea" />
        <path d="M8 22.500a6.500 6.500 0 0 1-2-12.500C7 4.500 12 1.500 17 1.500S26 4 27.500 9a7 7 0 0 1-1.500 13.500z" fill="none" stroke="#111" strokeWidth="2.200" />
      </svg>
      <svg viewBox="0 0 34 34" className="ml-[29px] h-[34px] w-[34px] shrink-0" fill="none" stroke="#111" strokeWidth="2.200">
        <path d="M1.500 16A14.500 14.500 0 0 1 29 9.500M31 1v9h-9M11 24H3.500v8.500M3.500 24q5 7 13 7.500" />
        <circle cx="25" cy="24.500" r="8" fill="#ff9a06" stroke="none" />
      </svg>
      <div className="mb-[3px] ml-8 flex w-[54px] flex-col items-center leading-8 tracking-[-0.02em]">
        <span>ENG</span>
        <span>IN</span>
      </div>
      <svg viewBox="0 0 32 24" className="ml-[33px] h-6 w-8 shrink-0" fill="none" stroke="#111" strokeWidth="2.100">
        <path d="M.8 10a21 21 0 0 1 30.400 0M5.500 14.500a15 15 0 0 1 21 0M10 18.500a9 9 0 0 1 12 0" />
        <circle cx="16" cy="21" r="2.400" fill="#111" stroke="none" />
      </svg>
      <svg viewBox="0 0 34 28" className="ml-4 h-7 w-[34px] shrink-0" fill="none" stroke="#111" strokeWidth="2" strokeLinecap="round" strokeLinejoin="round">
        <path d="M1.500 9.500h5L14 3v22l-7.500-6.500h-5zM18.500 9.500q3 4.500 0 9M23 5.500q6.500 8.500 0 17M27.500 2q9 12 0 24" />
      </svg>
      <svg viewBox="0 0 34 26" className="mb-1 ml-3.5 h-[26px] w-[34px] shrink-0">
        <path d="M12 5h14q3 0 3 3v13q0 3-3 3H5q-3 0-3-3v-6" fill="none" stroke="#111" strokeWidth="2" />
        <path d="M12 8h13q1 0 1 1v11q0 1-1 1H6q-1 0-1-1v-3l7-5zM30.500 11h1.500q1.500 0 1.500 1.500v4q0 1.500-1.500 1.500h-1.500zM6 0 1 10h3.500L3 18l6.500-10H6.500L8.500 0z" fill="#111" />
      </svg>
      <div className="mb-1.5 flex flex-1 flex-col items-end leading-8">
        <span>18:46</span>
        <span className="tracking-[0.003em]">03-01-2024</span>
      </div>
      <svg viewBox="0 0 26 30" className="mr-[43px] mb-px ml-[17px] h-[30px] w-[26px] shrink-0" fill="#003f98">
        <path d="M13 0c6 0 10 4.500 10 10v8l3 4.500V24H0v-1.500L3 18v-8C3 4.500 7 0 13 0zM8 26h10q-1 4-5 4t-5-4z" />
      </svg>
    </div>
  );
}

export default function App() {
  return (
    <div className="flex h-[1920px] w-[2880px] flex-col overflow-hidden bg-white font-['Open_Sans','Noto_Sans',sans-serif] leading-none">
      <TabStrip />
      <Toolbar />
      <Bookmarks />
      <Page />
      <Taskbar />
    </div>
  );
}
